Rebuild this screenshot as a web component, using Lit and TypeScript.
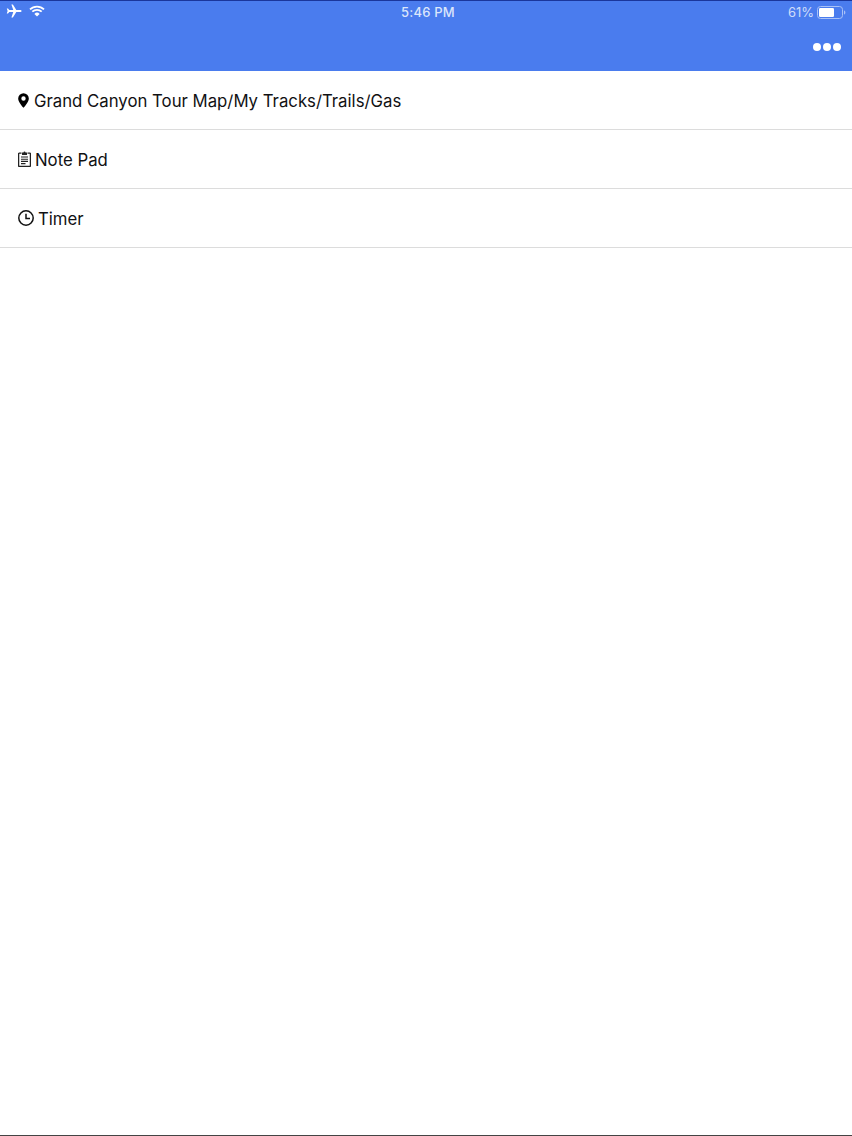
import { LitElement, html, css } from "lit";
import { customElement } from "lit/decorators.js";

@customElement("app-root")
export class AppRoot extends LitElement {
  static styles = css`
    :host { display: flex; flex-direction: column; width: 852px; height: 1136px; background: #fff; font-family: Inter, "Liberation Sans", sans-serif; overflow: hidden; }
    .head { height: 71px; box-sizing: border-box; background: #4a7cee; border-top: 1px solid #1a369c; display: flex; flex-direction: column; color: #fff; }
    .status { height: 22px; display: grid; grid-template-columns: 1fr auto 1fr; align-items: center; padding: 0 6px; font-size: 13px; font-weight: 500; }
    .status-left { display: flex; align-items: center; gap: 7px; padding-bottom: 2px; }
    .time { color: #dbe6fb; letter-spacing: 0.2px; margin-left: 4px; }
    .status-right { display: flex; align-items: center; justify-content: flex-end; gap: 3px; color: #cfdcfa; font-weight: 400; }
    .actions { flex: 1; display: flex; justify-content: flex-end; align-items: center; padding: 0 11px 0 0; gap: 2px; }
    .dot { width: 8px; height: 8px; border-radius: 50%; background: #fff; }
    .list { flex: 1; }
    .row { height: 58px; border-bottom: 1px solid #dcdcdc; display: flex; align-items: center; padding-left: 18px; gap: 4px; font-size: 16.75px; color: #111113; }
    .row span { padding-top: 2px; }
    .row svg { flex: none; display: block; }
    .pin { margin-right: 1px; }
    .foot { height: 1px; background: #444; }
  `;

  render() {
    return html`
      <div class="head">
        <div class="status">
          <div class="status-left">
            <svg width="16" height="14" viewBox="0 0 16 14"><path fill="#fff" d="M15.600 7c0-.6-.8-.95-1.600-.95h-3.700L6.900.6H5.400l1.900 5.450H3.300L2 4.400H.8l.8 2.600-.8 2.600H2l1.300-1.650h4L5.400 13.400h1.500l3.400-5.450H14c.8 0 1.600-.35 1.600-.95z"/></svg>
            <svg width="16" height="12" viewBox="0 0 16 12"><path fill="none" stroke="#fff" stroke-width="1.800" d="M1 4.400a10 10 0 0 1 14 0M3.300 6.700a6.800 6.800 0 0 1 9.400 0"/><path fill="#fff" d="M8 11.600 5.400 8.900a3.700 3.700 0 0 1 5.200 0z"/></svg>
          </div>
          <div class="time">5:46 PM</div>
          <div class="status-right">
            <span>61%</span>
            <svg width="29" height="13" viewBox="0 0 29 13"><rect x="0.5" y="0.5" width="25" height="12" rx="3" fill="none" stroke="#a9c1f7"/><rect x="2" y="2" width="15" height="9" rx="1.200" fill="#fff"/><path d="M27 4.500c.9.2 1.400 1 1.400 2s-.5 1.800-1.400 2z" fill="#a9c1f7"/></svg>
          </div>
        </div>
        <div class="actions">
          <div class="dot"></div><div class="dot"></div><div class="dot"></div>
        </div>
      </div>
      <div class="list">
        <div class="row">
          <svg class="pin" width="11" height="15" viewBox="0 0 12 16"><path fill="#000" fill-rule="evenodd" d="M6 0a5.800 5.800 0 0 0-5.800 5.800C.2 9.400 4 13.700 6 16c2-2.300 5.800-6.600 5.800-10.200A5.800 5.800 0 0 0 6 0zm0 3.400a2.400 2.400 0 1 1 0 4.800 2.400 2.400 0 0 1 0-4.800z"/></svg>
          <span>Grand Canyon Tour Map/My Tracks/Trails/Gas</span>
        </div>
        <div class="row">
          <svg width="13" height="16" viewBox="0 0 13 16"><path fill="none" stroke="#222" stroke-width="1.300" d="M3.500 2.200H1.100a.5.5 0 0 0-.5.5v12.200a.5.5 0 0 0 .5.5h10.800a.5.5 0 0 0 .5-.5V2.700a.5.5 0 0 0-.5-.5H9.500"/><path fill="#222" d="M4 1.500h1.500a1 1 0 0 1 2 0H9v2.500H4z"/><path stroke="#222" stroke-width="1.100" d="M3 6h7M3 8.200h7M3 10.400h7M3 12.600h4.500"/></svg>
          <span>Note Pad</span>
        </div>
        <div class="row">
          <svg width="16" height="16" viewBox="0 0 16 16"><circle cx="8" cy="8" r="7.200" fill="none" stroke="#111" stroke-width="1.500"/><path fill="none" stroke="#111" stroke-width="1.500" d="M8 3.800V8.500H12"/></svg>
          <span>Timer</span>
        </div>
      </div>
      <div class="foot"></div>
    `;
  }
}
